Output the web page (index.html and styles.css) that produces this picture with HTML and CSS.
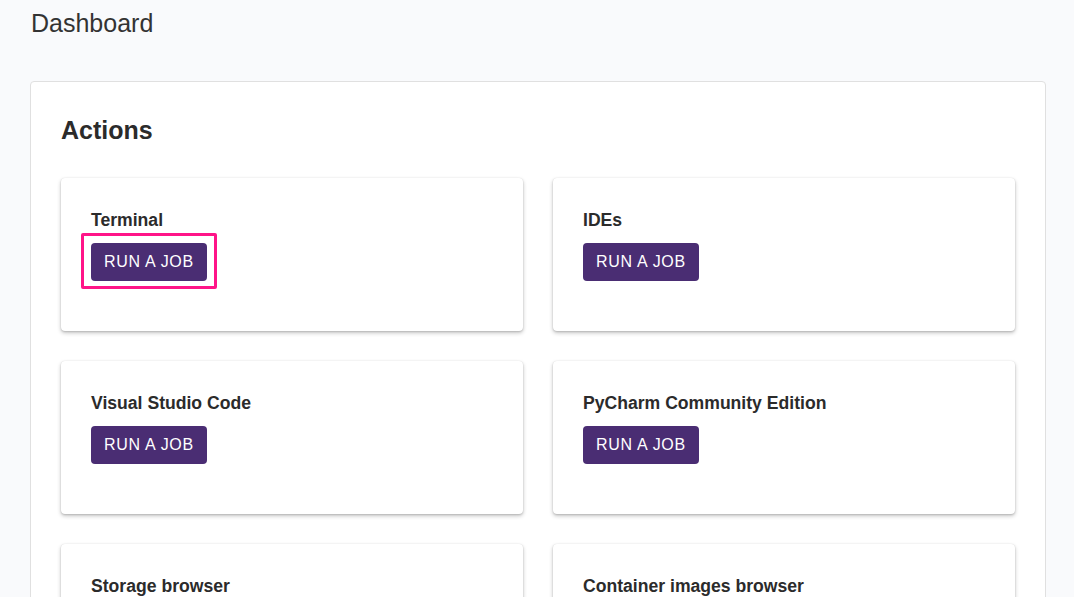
FILE: index.html
```html
<!DOCTYPE html>
<html lang="en">
<head>
<meta charset="utf-8">
<title>Dashboard</title>
<link rel="stylesheet" href="styles.css">
</head>
<body>
<div class="page">
  <h1 class="page-title">Dashboard</h1>
  <section class="panel">
    <h2 class="panel-title">Actions</h2>
    <div class="grid">
      <div class="card">
        <h3 class="card-title">Terminal</h3>
        <div class="btn-wrap"><button class="btn">RUN A JOB</button><span class="highlight"></span></div>
      </div>
      <div class="card">
        <h3 class="card-title">IDEs</h3>
        <div class="btn-wrap"><button class="btn">RUN A JOB</button></div>
      </div>
      <div class="card">
        <h3 class="card-title">Visual Studio Code</h3>
        <div class="btn-wrap"><button class="btn">RUN A JOB</button></div>
      </div>
      <div class="card">
        <h3 class="card-title">PyCharm Community Edition</h3>
        <div class="btn-wrap"><button class="btn">RUN A JOB</button></div>
      </div>
      <div class="card">
        <h3 class="card-title">Storage browser</h3>
        <div class="btn-wrap"><button class="btn">RUN A JOB</button></div>
      </div>
      <div class="card">
        <h3 class="card-title">Container images browser</h3>
        <div class="btn-wrap"><button class="btn">RUN A JOB</button></div>
      </div>
    </div>
  </section>
</div>
</body>
</html>
```
FILE: styles.css
```css
html, body {
  margin: 0;
  padding: 0;
  overflow: hidden;
  background: #f9fafc;
  font-family: "Liberation Sans", Arial, sans-serif;
  color: #2b2b2b;
}

.page {
  padding: 8px 28px 40px 30px;
}

.page-title {
  margin: 0 0 43px 1px;
  font-size: 25px;
  font-weight: 400;
  line-height: 30px;
  color: #333;
}

.panel {
  background: #fff;
  border: 1px solid #e0e0e0;
  border-radius: 4px;
  padding: 33px 30px 40px 30px;
}

.panel-title {
  margin: 0 0 33px 0;
  font-size: 25px;
  font-weight: 700;
  line-height: 30px;
  color: #2b2b2b;
}

.grid {
  display: grid;
  grid-template-columns: 462px 462px;
  column-gap: 30px;
  row-gap: 30px;
}

.card {
  background: #fff;
  border-radius: 4px;
  box-shadow: 0 2px 4px rgba(0, 0, 0, 0.22), 0 1px 2px rgba(0, 0, 0, 0.12), 0 0 1px rgba(0, 0, 0, 0.12);
  padding: 32px 30px 50px 30px;
  height: 153px;
  box-sizing: border-box;
}

.card-title {
  margin: 0 0 13px 0;
  font-size: 17.6px;
  font-weight: 700;
  line-height: 20px;
  color: #2b2b2b;
}

.btn-wrap {
  position: relative;
  display: inline-block;
}

.btn {
  display: inline-flex;
  align-items: center;
  justify-content: center;
  height: 38px;
  padding: 0 13px;
  border: none;
  border-radius: 4px;
  background: #4a2d73;
  color: #fff;
  font-family: "Liberation Sans", Arial, sans-serif;
  font-size: 16px;
  letter-spacing: 0.7px;
  cursor: pointer;
}

.highlight {
  position: absolute;
  left: -10px;
  top: -10px;
  width: 130px;
  height: 50px;
  border: 3px solid #ff1488;
  border-radius: 2px;
  pointer-events: none;
}
```
